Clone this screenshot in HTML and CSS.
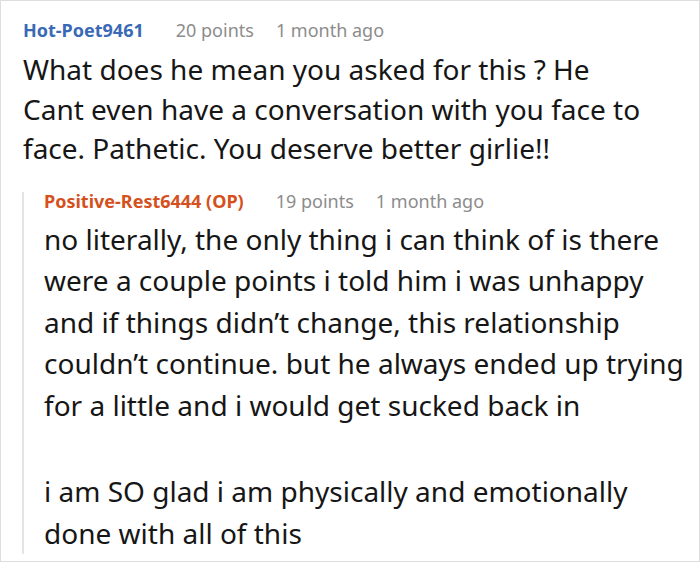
FILE: index.html
```html
<!DOCTYPE html>
<html lang="en">
<head>
  <meta charset="UTF-8">
  <title>Comment thread</title>
  <link rel="stylesheet" href="styles.css">
</head>
<body>
  <div class="thread">
    <div class="comment">
      <div class="meta">
        <span class="author">Hot-Poet9461</span>
        <span class="info">20 points</span>
        <span class="info">1 month ago</span>
      </div>
      <p class="text">What does he mean you asked for this ? He<br>Cant even have a conversation with you face to face. Pathetic. You deserve better girlie!!</p>

      <div class="reply">
        <div class="meta">
          <span class="author op">Positive-Rest6444 (OP)</span>
          <span class="info">19 points</span>
          <span class="info">1 month ago</span>
        </div>
        <p class="text">no literally, the only thing i can think of is there were a couple points i told him i was unhappy and if things didn’t change, this relationship couldn’t continue. but he always ended up trying for a little and i would get sucked back in</p>
        <p class="text">i am SO glad i am physically and emotionally done with all of this</p>
      </div>
    </div>
  </div>
</body>
</html>
```

FILE: styles.css
```css
html, body {
  margin: 0;
  padding: 0;
  background: #fff;
}
body {
  font-family: "Noto Sans", "Open Sans", sans-serif;
  color: #161616;
}
.thread {
  width: 700px;
  height: 562px;
  box-sizing: border-box;
  border: 1px solid #dedede;
  padding: 20px 15px 0 22px;
  overflow: hidden;
}
.meta {
  display: flex;
  align-items: baseline;
  gap: 22px;
  font-size: 18px;
  line-height: 18px;
  margin-bottom: 11px;
}
.author {
  color: #3a6ab5;
  font-weight: bold;
  margin-right: 10px;
}
.author.op {
  color: #d4511e;
}
.info {
  color: #8c8c8c;
}
.text {
  margin: 0;
  font-size: 28px;
  line-height: 39.5px;
}
.reply {
  margin-top: 23px;
  margin-left: -1px;
  border-left: 2px solid #e4e4e4;
  padding-left: 20px;
}
.reply .meta {
  margin-bottom: 9px;
}
.reply .text {
  line-height: 41.5px;
}
.reply .text + .text {
  margin-top: 45px;
}
```
